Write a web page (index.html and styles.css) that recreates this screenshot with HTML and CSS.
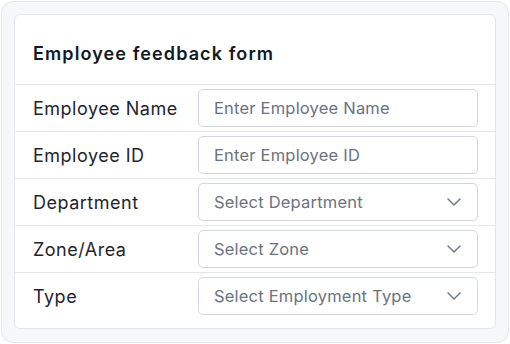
FILE: index.html
```html
<!DOCTYPE html>
<html>
<head>
<meta charset="utf-8">
<link rel="stylesheet" href="styles.css">
</head>
<body>
<div class="frame">
  <div class="card">
    <div class="card-head">
      <h1 class="title">Employee feedback form</h1>
    </div>
    <div class="row">
      <div class="label">Employee Name</div>
      <div class="field"><span class="ph">Enter Employee Name</span></div>
    </div>
    <div class="row">
      <div class="label">Employee ID</div>
      <div class="field"><span class="ph">Enter Employee ID</span></div>
    </div>
    <div class="row">
      <div class="label">Department</div>
      <div class="field select"><span class="ph">Select Department</span>
        <svg class="chev" width="14" height="8" viewBox="0 0 14 8"><path d="M1 1l6 6 6-6" fill="none" stroke="#6b7280" stroke-width="1.4" stroke-linecap="round" stroke-linejoin="round"/></svg>
      </div>
    </div>
    <div class="row">
      <div class="label">Zone/Area</div>
      <div class="field select"><span class="ph">Select Zone</span>
        <svg class="chev" width="14" height="8" viewBox="0 0 14 8"><path d="M1 1l6 6 6-6" fill="none" stroke="#6b7280" stroke-width="1.4" stroke-linecap="round" stroke-linejoin="round"/></svg>
      </div>
    </div>
    <div class="row">
      <div class="label">Type</div>
      <div class="field select"><span class="ph">Select Employment Type</span>
        <svg class="chev" width="14" height="8" viewBox="0 0 14 8"><path d="M1 1l6 6 6-6" fill="none" stroke="#6b7280" stroke-width="1.4" stroke-linecap="round" stroke-linejoin="round"/></svg>
      </div>
    </div>
  </div>
</div>
</body>
</html>
```
FILE: styles.css
```css
* { box-sizing: border-box; }
html, body { margin: 0; padding: 0; background: #ffffff; }
body { font-family: Inter, "Liberation Sans", sans-serif; }
.frame {
  margin: 1px;
  width: 508px;
  height: 342px;
  border: 1.5px solid #e4e7ee;
  border-radius: 12px;
  background: #f6f7f9;
  padding: 12px;
}
.card {
  width: 482px;
  height: 315px;
  background: #ffffff;
  border: 1px solid #e3e6eb;
  border-radius: 6px;
  padding-bottom: 9px;
}
.card-head {
  height: 69px;
  display: flex;
  align-items: center;
  padding: 0 18px;
  padding-top: 7px;
}
.title {
  margin: 0;
  font-size: 18px;
  font-weight: 600;
  color: #111827;
  letter-spacing: 1.1px;
}
.row {
  border-top: 1px solid #e5e7eb;
  height: 47px;
  padding: 4px 17px 4px 18px;
  display: flex;
  align-items: center;
}
.label {
  width: 165px;
  font-size: 18px;
  letter-spacing: 0.5px;
  color: #1f2430;
}
.field {
  flex: 1;
  height: 38px;
  border: 1px solid #d2d6de;
  border-radius: 5px;
  display: flex;
  align-items: center;
  padding: 0 16px 0 15px;
}
.ph {
  flex: 1;
  font-size: 16.5px;
  letter-spacing: 0.2px;
  color: #6b7280;
}
.chev { flex: none; }
```
